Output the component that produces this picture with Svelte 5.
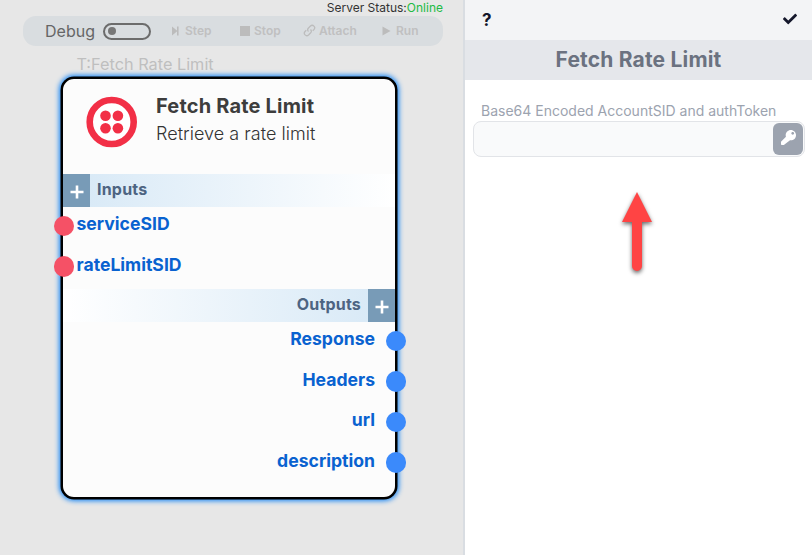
<script>
  const inputs = ['serviceSID', 'rateLimitSID'];
  const outputs = ['Response', 'Headers', 'url', 'description'];
</script>

<div class="app">
  <main class="canvas">
    <div class="status">Server Status:<span>Online</span></div>
    <div class="toolbar">
      <span class="debug">Debug</span>
      <span class="toggle"><i></i></span>
      <span class="tool step">
        <svg width="8" height="10" viewBox="0 0 8 10"><path d="M0 .5 5.5 5 0 9.500ZM5 .5h1.600v9H5Z" /></svg>
        Step
      </span>
      <span class="tool stop">
        <svg width="10" height="10" viewBox="0 0 10 10"><path d="M0 0h10v10H0Z" /></svg>
        Stop
      </span>
      <span class="tool attach">
        <svg width="13" height="13" viewBox="-16 -16 544 544"><path d="M214 298a104 104 0 0 1 0-147l82-82a104 104 0 0 1 147 147l-52 52M298 214a104 104 0 0 1 0 147l-82 82A104 104 0 0 1 69 296l52-52" /></svg>
        Attach
      </span>
      <span class="tool run">
        <svg width="9" height="10" viewBox="0 0 9 10"><path d="M.5.500 8.500 5 .5 9.500Z" /></svg>
        Run
      </span>
    </div>

    <section class="node">
      <div class="tag">T:Fetch Rate Limit</div>
      <header>
        <svg width="52" height="52" viewBox="0 0 52 52">
          <circle cx="25.700" cy="26" r="22" fill="#fff" stroke="#f22f46" stroke-width="6.600" />
          <g fill="#f22f46">
            <circle cx="19.500" cy="19.800" r="5.300" /><circle cx="31.900" cy="19.800" r="5.300" />
            <circle cx="19.500" cy="32.200" r="5.300" /><circle cx="31.900" cy="32.200" r="5.300" />
          </g>
        </svg>
        <div class="heading">
          <h1>Fetch Rate Limit</h1>
          <p>Retrieve a rate limit</p>
        </div>
      </header>
      <div class="band in">
        <span class="plus"><svg width="14" height="14" viewBox="0 0 14 14"><path d="M7 .5v13M.5 7h13" /></svg></span>
        <b>Inputs</b>
      </div>
      <div class="ports ins">
        {#each inputs as name}
          <div class="port"><i></i><span>{name}</span></div>
        {/each}
      </div>
      <div class="band out">
        <b>Outputs</b>
        <span class="plus"><svg width="14" height="14" viewBox="0 0 14 14"><path d="M7 .5v13M.5 7h13" /></svg></span>
      </div>
      <div class="ports outs">
        {#each outputs as name}
          <div class="port"><span>{name}</span><i></i></div>
        {/each}
      </div>
    </section>
  </main>

  <aside>
    <div class="bar">
      <b>?</b>
      <svg width="14" height="14" viewBox="0 0 512 512"><path d="M173.898 439.404l-166.400-166.400c-9.997-9.997-9.997-26.206 0-36.204l36.203-36.204c9.997-9.998 26.207-9.998 36.204 0L192 312.690 432.095 72.596c9.997-9.997 26.207-9.997 36.204 0l36.203 36.204c9.997 9.997 9.997 26.206 0 36.204l-294.400 294.401c-9.998 9.997-26.207 9.997-36.204-.001z" /></svg>
    </div>
    <h2>Fetch Rate Limit</h2>
    <div class="field">
      <label for="auth">Base64 Encoded AccountSID and authToken</label>
      <div class="control">
        <input id="auth" type="text" />
        <button aria-label="Key">
          <svg width="15" height="15" viewBox="0 0 512 512"><path d="M512 176.001C512 273.203 433.202 352 336 352c-11.220 0-22.190-1.062-32.827-3.069l-24.012 27.014A23.999 23.999 0 0 1 261.223 384L120 495c-13 17-30 17-44 17H24c-13.255 0-24-10.745-24-24v-78.059c0-6.365 2.529-12.470 7.029-16.971l161.802-161.802C163.108 213.814 160 195.271 160 176 160 78.798 238.797.001 335.999 0 433.488-.001 512 78.511 512 176.001zM352 112c0 26.510 21.490 48 48 48s48-21.490 48-48-21.490-48-48-48-48 21.490-48 48z" /></svg>
        </button>
      </div>
    </div>
    <svg class="arrow" width="50" height="100" viewBox="0 0 50 100">
      <path d="M25 12 40 42H30V86a5 5 0 0 1-10 0V42H10Z" />
    </svg>
  </aside>
</div>

<style>
  :global(body) { margin: 0; overflow: hidden; }
  .app { display: flex; width: 812px; height: 555px; font-family: Inter, sans-serif; background: #e7e7e7; }
  .app, .app * { box-sizing: border-box; }
  svg { display: block; flex: none; }
  .canvas { position: relative; width: 463px; flex: none; }
  .status { height: 16px; padding-right: 20px; text-align: right; font-size: 12px; line-height: 16px; color: #333; }
  .status span { color: #22bb44; }
  .toolbar { display: flex; align-items: center; width: 420px; height: 30px; margin-left: 23px; padding: 0 0 1px 22px; border-radius: 13px; background: #d9dde0; }
  .debug { width: 58px; font-size: 16px; color: #666; }
  .toggle { width: 48px; height: 17px; margin-top: 1px; padding: 2.500px 3px; border: 2px solid #6c6c6c; border-radius: 9px; }
  .toggle i { display: block; width: 8px; height: 8px; border-radius: 50%; background: #777; }
  .tool { display: flex; align-items: center; gap: 5px; font-size: 12px; font-weight: 600; color: #c0c0c0; }
  .tool svg { fill: #bcbcbc; }
  .step { margin-left: 21px; width: 68px; }
  .stop { width: 63px; gap: 4px; }
  .attach { width: 80px; gap: 3px; }
  .attach path { fill: none; stroke: #bcbcbc; stroke-width: 52; }
  .run { gap: 5px; margin-left: -1px; }
  .node { position: absolute; left: 61px; top: 77px; width: 336px; height: 422px; border: 2px solid #000; border-radius: 13px; background: #fcfcfc; box-shadow: 0 0 0 0.500px #000, 0 0 5px 2px #1c88f5; }
  .tag { position: absolute; left: 13.500px; top: -25px; font-size: 16.300px; line-height: 20px; color: #bfbfbf; white-space: nowrap; }
  header { display: flex; height: 95px; padding: 17px 0 0 23px; gap: 18px; }
  h1 { margin: -3px 0 0; font-size: 20px; font-weight: 700; letter-spacing: 0.180px; line-height: 27px; color: #3d3d3d; white-space: nowrap; }
  p { margin: 0; font-size: 18px; font-weight: 300; letter-spacing: 0.030px; line-height: 28px; color: #333; white-space: nowrap; }
  .band { display: flex; align-items: center; height: 33px; color: #4d6482; font-size: 16px; }
  .band b { font-weight: 700; letter-spacing: 0.200px; line-height: 30px; padding-bottom: 3px; }
  .in { background: linear-gradient(90deg, #d6e8f6, #fff); gap: 7px; }
  .out { background: linear-gradient(270deg, #d6e8f6, #fff); justify-content: flex-end; gap: 7px; }
  .plus { display: flex; align-items: center; justify-content: center; width: 27px; height: 33px; padding-top: 2px; background: #789bb7; }
  .plus path { stroke: #fff; stroke-width: 2.600; }
  .ports { color: #0962d0; font-size: 17.600px; font-weight: 700; }
  .ins { height: 82px; }
  .port { display: flex; align-items: center; height: 40.500px; position: relative; top: -1.500px; }
  .port i { flex: none; width: 20.500px; height: 20.500px; border-radius: 50%; }
  .port span { line-height: 30px; padding-bottom: 3px; }
  .ins .port { gap: 2.500px; margin-left: -9.500px; }
  .ins i { background: #f55166; }
  .outs .port { justify-content: flex-end; gap: 10.500px; margin-right: -11px; }
  .outs i { background: #3b8afb; }
  aside { width: 349px; border-left: 2px solid #d9dde2; background: #fff; }
  .bar { display: flex; align-items: center; justify-content: space-between; height: 40px; padding: 0 15px 2px 17px; background: #f3f4f6; color: #14172b; font-size: 17px; }
  .bar b { position: relative; top: 1px; }
  .bar svg { fill: #14172b; }
  h2 { height: 40px; margin: 0; background: #e5e7eb; color: #6b7280; text-align: center; font-size: 21px; font-weight: 700; letter-spacing: 0.180px; line-height: 40px; }
  .field { padding: 21px 7px 0 8px; }
  label { display: block; height: 20px; padding-left: 8px; color: #9ca3af; font-size: 14px; line-height: 20px; }
  .control { display: flex; align-items: center; height: 36px; padding-right: 1px; border: 1px solid #e2e4e8; border-radius: 8px; background: #f9fafb; }
  input { flex: 1; min-width: 0; border: 0; outline: 0; background: transparent; }
  button { display: flex; align-items: center; justify-content: center; width: 30px; height: 32px; padding: 0 0 3px; border: 0; border-radius: 6px; background: #9ca3af; }
  button svg { fill: #fff; }
  .arrow { margin: 23px 0 0 147px; overflow: visible; filter: drop-shadow(0 2px 2px rgba(0, 0, 0, 0.6)); }
  .arrow path { fill: #ff4444; }
</style>
